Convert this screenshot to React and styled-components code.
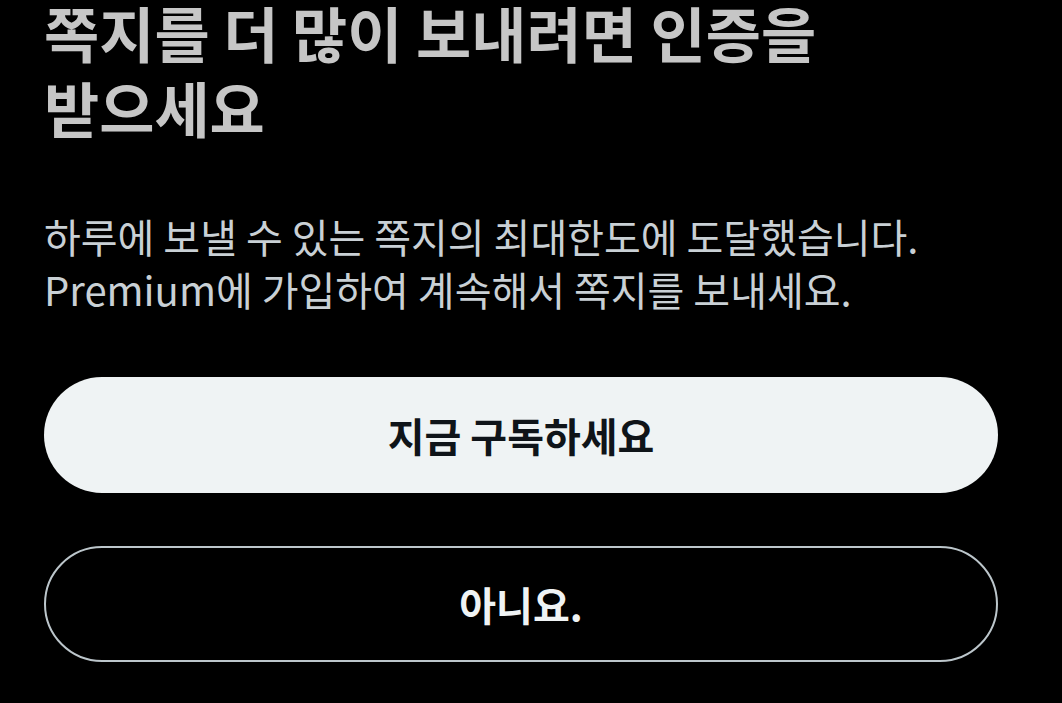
import React from 'react';
import styled, { createGlobalStyle } from 'styled-components';

const GlobalStyle = createGlobalStyle`
  html, body {
    margin: 0;
    padding: 0;
    background: #000;
  }
  body {
    font-family: "Noto Sans CJK KR", "Noto Sans", sans-serif;
  }
`;

const Sheet = styled.div`
  width: 1062px;
  height: 703px;
  box-sizing: border-box;
  padding: 0 64px 0 44px;
  background: #000;
  display: flex;
  flex-direction: column;
  overflow: hidden;
`;

const Title = styled.h1`
  margin: -6px 0 0 0;
  font-size: 60px;
  line-height: 75px;
  font-weight: 700;
  color: #c6c6c6;
`;

const Body = styled.p`
  margin: 66px 0 0 0;
  font-size: 40px;
  line-height: 53px;
  font-weight: 400;
  color: #c9d0d5;
`;

const Actions = styled.div`
  display: flex;
  flex-direction: column;
  gap: 53px;
  margin-top: 61px;
`;

const Button = styled.button`
  height: 116px;
  width: 100%;
  border-radius: 58px;
  box-sizing: border-box;
  font-family: "Noto Sans CJK KR", "Noto Sans", sans-serif;
  font-size: 40px;
  font-weight: 700;
  cursor: pointer;
  background: ${p => (p.$outline ? '#000' : '#eff3f4')};
  color: ${p => (p.$outline ? '#eff3f4' : '#0f1419')};
  border: ${p => (p.$outline ? '2px solid #bcc6cb' : 'none')};
`;

export default function App() {
  return (
    <>
      <GlobalStyle />
      <Sheet>
        <Title>
          쪽지를 더 많이 보내려면 인증을
          <br />
          받으세요
        </Title>
        <Body>
          하루에 보낼 수 있는 쪽지의 최대한도에 도달했습니다.
          <br />
          Premium에 가입하여 계속해서 쪽지를 보내세요.
        </Body>
        <Actions>
          <Button>지금 구독하세요</Button>
          <Button $outline>아니요.</Button>
        </Actions>
      </Sheet>
    </>
  );
}
